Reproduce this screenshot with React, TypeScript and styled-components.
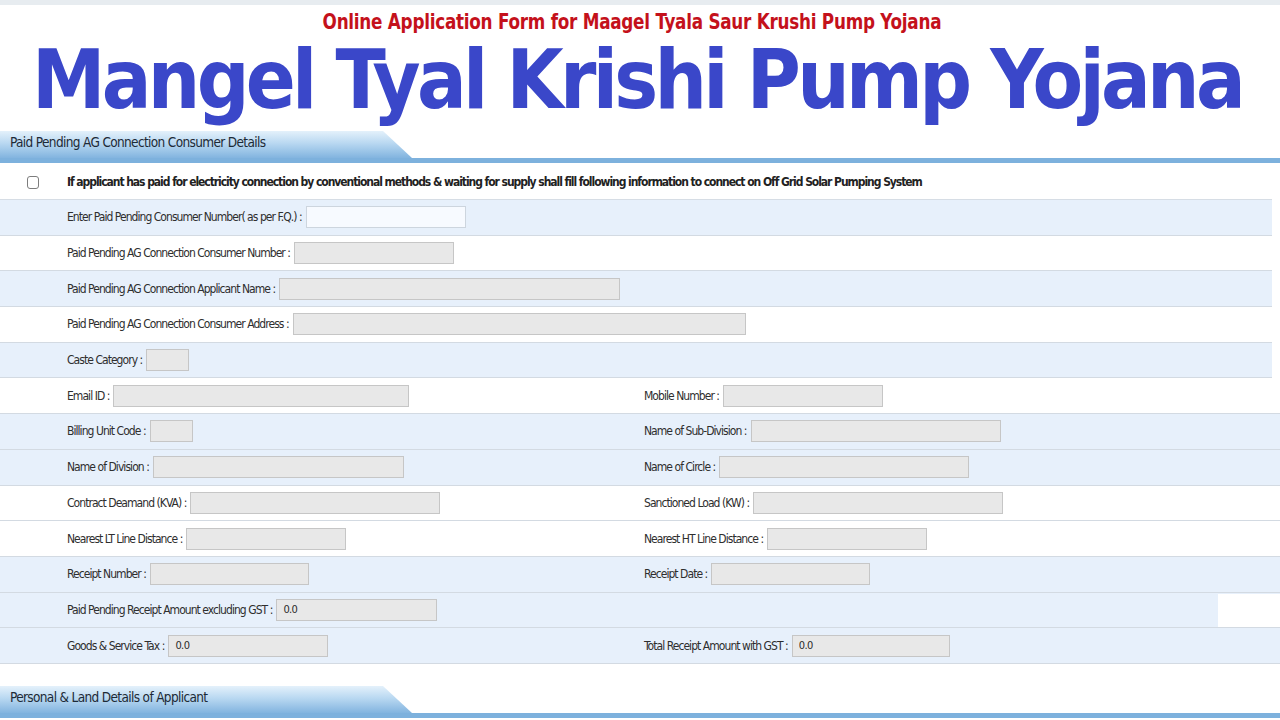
import styled, { createGlobalStyle } from "styled-components";

const GlobalStyle = createGlobalStyle`
  html, body {
    margin: 0;
    padding: 0;
    background: #ffffff;
  }
  body {
    font-family: "DejaVu Sans Condensed", "DejaVu Sans", "Liberation Sans", sans-serif;
    color: #2b2b2b;
  }
`;

type Field = {
  label: string;
  width: number;
  value?: string;
  editable?: boolean;
};

type RowDef = {
  tone: "blue" | "white";
  inset?: boolean;
  trail?: boolean;
  fields: Field[];
};

const rows: RowDef[] = [
  { tone: "blue", inset: true, fields: [{ label: "Enter Paid Pending Consumer Number( as per F.Q.) :", width: 160, editable: true }] },
  { tone: "white", inset: true, fields: [{ label: "Paid Pending AG Connection Consumer Number :", width: 160 }] },
  { tone: "blue", inset: true, fields: [{ label: "Paid Pending AG Connection Applicant Name :", width: 341 }] },
  { tone: "white", inset: true, fields: [{ label: "Paid Pending AG Connection Consumer Address :", width: 453 }] },
  { tone: "blue", inset: true, fields: [{ label: "Caste Category :", width: 43 }] },
  {
    tone: "white",
    fields: [
      { label: "Email ID :", width: 296 },
      { label: "Mobile Number :", width: 160 },
    ],
  },
  {
    tone: "blue",
    fields: [
      { label: "Billing Unit Code :", width: 43 },
      { label: "Name of Sub-Division :", width: 250 },
    ],
  },
  {
    tone: "blue",
    fields: [
      { label: "Name of Division :", width: 251 },
      { label: "Name of Circle :", width: 250 },
    ],
  },
  {
    tone: "white",
    fields: [
      { label: "Contract Deamand (KVA) :", width: 250 },
      { label: "Sanctioned Load (KW) :", width: 250 },
    ],
  },
  {
    tone: "white",
    fields: [
      { label: "Nearest LT Line Distance :", width: 160 },
      { label: "Nearest HT Line Distance :", width: 160 },
    ],
  },
  {
    tone: "blue",
    fields: [
      { label: "Receipt Number :", width: 159 },
      { label: "Receipt Date :", width: 159 },
    ],
  },
  {
    tone: "blue",
    trail: true,
    fields: [{ label: "Paid Pending Receipt Amount excluding GST :", width: 161, value: "0.0" }],
  },
  {
    tone: "blue",
    fields: [
      { label: "Goods & Service Tax :", width: 160, value: "0.0" },
      { label: "Total Receipt Amount with GST :", width: 158, value: "0.0" },
    ],
  },
];

const gridFor = (row: RowDef) => {
  if (row.trail) return "1fr 62px";
  if (row.fields.length === 1) return "1fr";
  return "644px 1fr";
};

const App = () => {
  return (
    <Page>
      <GlobalStyle />
      <TopStrip />
      <SubTitle>
        <SubTitleText>Online Application Form for Maagel Tyala Saur Krushi Pump Yojana</SubTitleText>
      </SubTitle>
      <BigTitle>
        <BigTitleText>Mangel Tyal Krishi Pump Yojana</BigTitleText>
      </BigTitle>

      <SectionBar>
        <SectionTab>Paid Pending AG Connection Consumer Details</SectionTab>
      </SectionBar>

      <CheckRow>
        <CheckBox type="checkbox" />
        <CheckText>
          If applicant has paid for electricity connection by conventional methods &amp; waiting for supply shall fill
          following information to connect on Off Grid Solar Pumping System
        </CheckText>
      </CheckRow>

      {rows.map((row, i) => (
        <Row key={i} $tone={row.tone} $inset={!!row.inset} $cols={gridFor(row)}>
          {row.fields.map((f) => (
            <Cell key={f.label}>
              <Label>{f.label}</Label>
              <Input
                $w={f.width}
                $editable={!!f.editable}
                defaultValue={f.value}
                readOnly={!f.editable}
              />
            </Cell>
          ))}
          {row.trail && <TrailBlank />}
        </Row>
      ))}

      <Gap />

      <SectionBar>
        <SectionTab>Personal &amp; Land Details of Applicant</SectionTab>
      </SectionBar>
    </Page>
  );
};

export default App;

const Page = styled.div`
  width: 1280px;
  height: 720px;
  overflow: hidden;
  background: #ffffff;
`;

const TopStrip = styled.div`
  height: 5px;
  background: #e7ecf0;
`;

const SubTitle = styled.div`
  margin-top: 5px;
  height: 24px;
  display: flex;
  justify-content: center;
  padding-right: 16px;
  white-space: nowrap;
`;

const SubTitleText = styled.span`
  display: inline-block;
  line-height: 24px;
  font-size: 22px;
  font-weight: 700;
  letter-spacing: -0.3px;
  color: #c4111b;
  transform: scaleX(0.85);
`;

const BigTitle = styled.div`
  margin-top: 5px;
  height: 92px;
  display: flex;
  justify-content: center;
  padding-right: 6px;
  white-space: nowrap;
`;

const BigTitleText = styled.span`
  font-size: 82px;
  line-height: 82px;
  font-weight: 700;
  color: #3a47c9;
  letter-spacing: -3.7px;
`;

const SectionBar = styled.div`
  height: 32px;
  box-sizing: border-box;
  border-bottom: 5px solid #7db1dd;
  display: flex;
  align-items: flex-end;
`;

const SectionTab = styled.div`
  width: 412px;
  height: 27px;
  box-sizing: border-box;
  padding: 2px 0 0 10px;
  line-height: 18px;
  font-size: 13.5px;
  letter-spacing: -0.65px;
  color: #1d2a36;
  background: linear-gradient(180deg, #e4f1fb 0%, #b9d8f1 45%, #82b4df 100%);
  clip-path: polygon(0 0, 383px 0, 100% 100%, 0 100%);
  white-space: nowrap;
`;

const CheckRow = styled.div`
  width: 1272px;
  height: 37px;
  box-sizing: border-box;
  display: flex;
  align-items: center;
  padding: 2px 0 0 27px;
  border-bottom: 1px solid #d6dde5;
  background: #ffffff;
`;

const CheckBox = styled.input`
  appearance: none;
  width: 12px;
  height: 13px;
  margin: 0 28px 0 0;
  border: 1px solid #7d7d7d;
  border-radius: 3px;
  background: #ffffff;
`;

const CheckText = styled.span`
  font-size: 12px;
  font-weight: 700;
  color: #222222;
  letter-spacing: -1.05px;
  white-space: nowrap;
`;

const Row = styled.div<{ $tone: "blue" | "white"; $inset: boolean; $cols: string }>`
  width: ${(p) => (p.$inset ? "1272px" : "1280px")};
  height: 35.7px;
  box-sizing: border-box;
  display: grid;
  grid-template-columns: ${(p) => p.$cols};
  background: ${(p) => (p.$tone === "blue" ? "#e7f0fb" : "#ffffff")};
  border-bottom: 1px solid #d3dae2;
`;

const Cell = styled.div`
  display: flex;
  align-items: center;
  gap: 4px;
  &:first-child {
    padding-left: 67px;
  }
`;

const Label = styled.span`
  font-size: 12px;
  color: #2e2e2e;
  letter-spacing: -0.95px;
  white-space: nowrap;
`;

const Input = styled.input<{ $w: number; $editable: boolean }>`
  width: ${(p) => p.$w}px;
  height: 22px;
  box-sizing: border-box;
  margin: 0;
  padding: 0 0 0 6px;
  border: 1px solid ${(p) => (p.$editable ? "#cdd5de" : "#c6c6c6")};
  background: ${(p) => (p.$editable ? "#f7faff" : "#e8e8e8")};
  font-family: inherit;
  font-size: 11px;
  letter-spacing: -0.6px;
  color: #2b2b2b;
  outline: none;
`;

const TrailBlank = styled.div`
  background: #ffffff;
  margin-top: 1px;
`;

const Gap = styled.div`
  height: 22px;
`;
